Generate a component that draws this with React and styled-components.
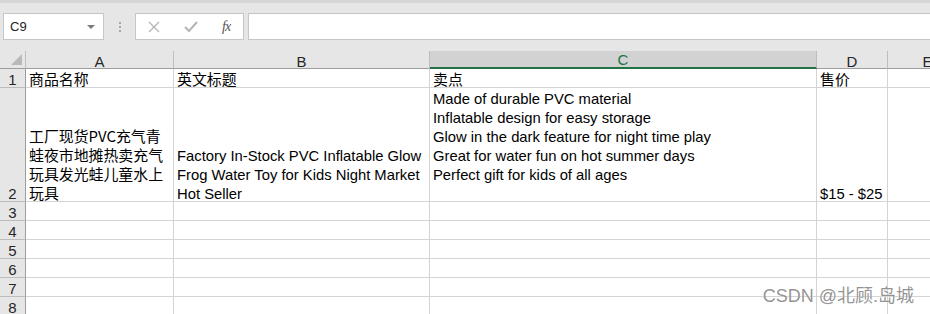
import { Fragment } from 'react'
import styled, { createGlobalStyle } from 'styled-components'

const GlobalStyle = createGlobalStyle`
  html, body {
    margin: 0;
    padding: 0;
    background: #e6e6e6;
  }
  body {
    font-family: 'Liberation Sans', 'Noto Sans CJK SC', sans-serif;
    overflow: hidden;
  }
`

const Page = styled.div`
  width: 930px;
  height: 314px;
  overflow: hidden;
  position: relative;
  background: #e6e6e6;
  border-top: 3px solid #d6d6d6;
  box-sizing: border-box;
`

const FormulaBar = styled.div`
  display: flex;
  align-items: center;
  height: 27px;
  margin: 10px 0 11px 3px;
`

const NameBox = styled.div`
  display: flex;
  align-items: center;
  justify-content: space-between;
  box-sizing: border-box;
  width: 101px;
  height: 27px;
  padding: 0 8px 0 6px;
  background: #fff;
  border: 1px solid #c6c6c6;
  font-size: 13px;
  color: #222;
`

const Caret = styled.span`
  width: 0;
  height: 0;
  border-left: 4px solid transparent;
  border-right: 4px solid transparent;
  border-top: 4px solid #7a7a7a;
`

const Dots = styled.div`
  display: flex;
  flex-direction: column;
  gap: 2px;
  margin: 0 14px 0 15px;
  span {
    width: 2px;
    height: 2px;
    background: #a8a8a8;
  }
`

const FxBox = styled.div`
  display: flex;
  align-items: center;
  box-sizing: border-box;
  width: 109px;
  height: 27px;
  padding: 0 0 0 12px;
  gap: 24px;
  background: #fff;
  border: 1px solid #c6c6c6;
`

const Fx = styled.span`
  font-family: 'Liberation Serif', serif;
  font-style: italic;
  font-size: 14px;
  color: #555;
  letter-spacing: -1px;
`

const FormulaInput = styled.div`
  flex: 1;
  height: 27px;
  margin-left: 4px;
  box-sizing: border-box;
  background: #fff;
  border: 1px solid #c6c6c6;
  border-right: none;
`

const Sheet = styled.div`
  display: grid;
  grid-template-columns: 26px 148px 256px 387px 71px 80px;
  grid-template-rows: 18px 19px 114px repeat(6, 19px);
  background: #fff;
`

const Corner = styled.div`
  position: relative;
  background: #e6e6e6;
  border-right: 1px solid #bdbdbd;
  border-bottom: 1px solid #9d9d9d;
  box-sizing: border-box;
  &::after {
    content: '';
    position: absolute;
    right: 3px;
    bottom: 3px;
    width: 0;
    height: 0;
    border-left: 11px solid transparent;
    border-bottom: 11px solid #b9b9b9;
  }
`

const ColHeader = styled.div`
  display: flex;
  align-items: flex-end;
  justify-content: center;
  box-sizing: border-box;
  overflow: hidden;
  background: ${(p) => (p.$active ? '#d2d2d2' : '#e6e6e6')};
  border-right: 1px solid #bdbdbd;
  border-bottom: ${(p) => (p.$active ? '2px solid #217346' : '1px solid #9d9d9d')};
  color: ${(p) => (p.$active ? '#217346' : '#262626')};
  font-size: 15px;
  line-height: 17px;
  span {
    transform: translateY(${(p) => (p.$active ? '1px' : '2px')});
  }
`

const RowHeader = styled.div`
  display: flex;
  align-items: flex-end;
  justify-content: center;
  box-sizing: border-box;
  overflow: hidden;
  background: #e6e6e6;
  border-right: 1px solid #9d9d9d;
  border-bottom: 1px solid #bdbdbd;
  color: #262626;
  font-size: 15px;
  line-height: 18px;
  span {
    transform: translateY(2px);
  }
`

const Cell = styled.div`
  display: flex;
  flex-direction: column;
  justify-content: flex-end;
  box-sizing: border-box;
  padding: 0 3px;
  border-right: 1px solid #d4d4d4;
  border-bottom: 1px solid #d4d4d4;
  color: #000;
  overflow: hidden;
`

const Lines = styled.div`
  transform: translateY(1px);
`

const Line = styled.div`
  height: 19px;
  line-height: 19px;
  white-space: nowrap;
  font-family: ${(p) =>
    p.$cjk ? "'Noto Sans CJK SC', sans-serif" : "'Liberation Sans', 'Noto Sans CJK SC', sans-serif"};
  font-size: ${(p) => (p.$cjk ? '14.9px' : '14.8px')};
  transform: translateY(${(p) => (p.$cjk ? '0' : '2px')});
`

const Watermark = styled.div`
  position: absolute;
  right: 16px;
  bottom: 7px;
  font-family: 'Liberation Sans', 'Noto Sans CJK SC', sans-serif;
  font-size: 18px;
  color: rgba(105, 105, 105, 0.72);
  text-shadow: 0 0 1px #fff;
  pointer-events: none;
`

const columns = ['A', 'B', 'C', 'D', 'E']

const rows = [
  [['商品名称'], ['英文标题'], ['卖点'], ['售价'], []],
  [
    ['工厂现货PVC充气青', '蛙夜市地摊热卖充气', '玩具发光蛙儿童水上', '玩具'],
    ['Factory In-Stock PVC Inflatable Glow', 'Frog Water Toy for Kids Night Market', 'Hot Seller'],
    [
      'Made of durable PVC material',
      'Inflatable design for easy storage',
      'Glow in the dark feature for night time play',
      'Great for water fun on hot summer days',
      'Perfect gift for kids of all ages',
      '',
    ],
    ['$15 - $25'],
    [],
  ],
]

const isCjk = (text) => /[\u4e00-\u9fff]/.test(text) && !/[a-z]{3}/.test(text)

function CrossIcon() {
  return (
    <svg width="12" height="12" viewBox="0 0 12 12">
      <path d="M1 1 L11 11 M11 1 L1 11" stroke="#b4b4b4" strokeWidth="1.3" fill="none" />
    </svg>
  )
}

function CheckIcon() {
  return (
    <svg width="14" height="12" viewBox="0 0 14 12">
      <path d="M1 6 L5 10 L13 1" stroke="#b4b4b4" strokeWidth="2" fill="none" />
    </svg>
  )
}

function App() {
  const allRows = [...rows]
  for (let i = 0; i < 6; i++) allRows.push([[], [], [], [], []])

  return (
    <>
      <GlobalStyle />
      <Page>
        <FormulaBar>
          <NameBox>
            C9
            <Caret />
          </NameBox>
          <Dots>
            <span />
            <span />
            <span />
          </Dots>
          <FxBox>
            <CrossIcon />
            <CheckIcon />
            <Fx>fx</Fx>
          </FxBox>
          <FormulaInput />
        </FormulaBar>
        <Sheet>
          <Corner />
          {columns.map((c) => (
            <ColHeader key={c} $active={c === 'C'}>
              <span>{c}</span>
            </ColHeader>
          ))}
          {allRows.map((cells, r) => (
            <Fragment key={r}>
              <RowHeader>
                <span>{r + 1}</span>
              </RowHeader>
              {cells.map((lines, c) => (
                <Cell key={c}>
                  {lines.length > 0 && (
                    <Lines>
                      {lines.map((line, i) => (
                        <Line key={i} $cjk={isCjk(line)}>
                          {line}
                        </Line>
                      ))}
                    </Lines>
                  )}
                </Cell>
              ))}
            </Fragment>
          ))}
        </Sheet>
        <Watermark>CSDN @北顾.岛城</Watermark>
      </Page>
    </>
  )
}

export default App
